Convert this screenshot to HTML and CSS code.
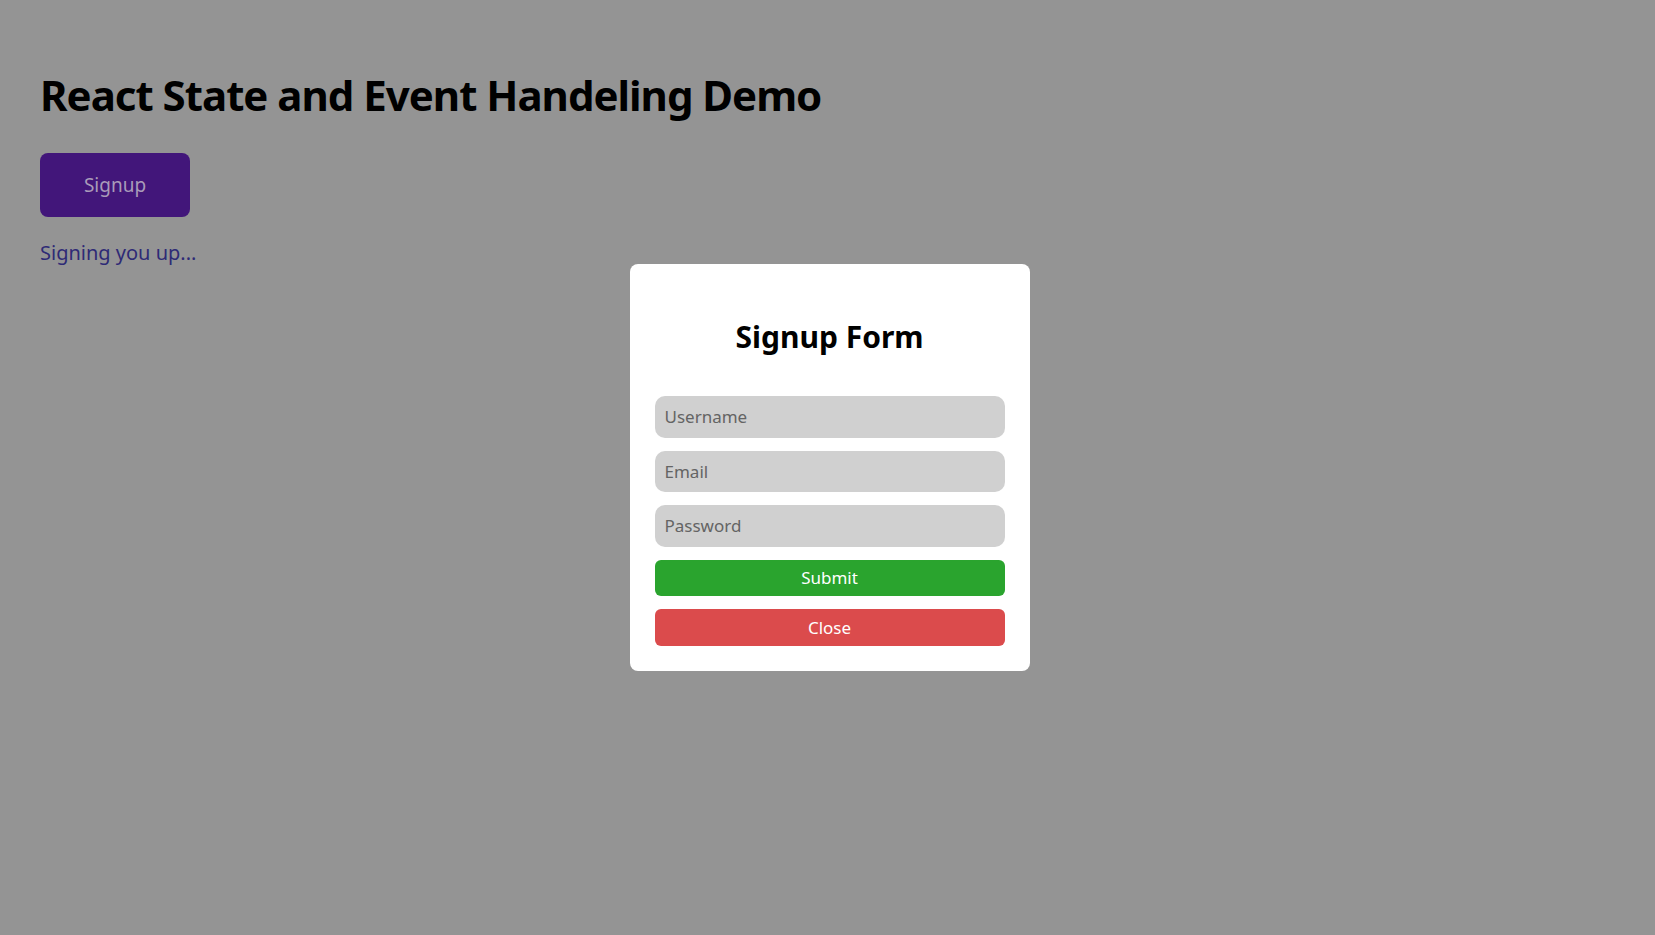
FILE: index.html
```html
<!DOCTYPE html>
<html lang="en">
<head>
<meta charset="utf-8">
<title>React State and Event Handeling Demo</title>
<link rel="stylesheet" href="styles.css">
</head>
<body>
<div class="app">
  <h1 class="title">React State and Event Handeling Demo</h1>
  <button class="signup-btn">Signup</button>
  <p class="status">Signing you up...</p>
</div>
<div class="overlay">
  <form class="modal">
    <h2 class="modal-title">Signup Form</h2>
    <input class="field" type="text" placeholder="Username">
    <input class="field" type="email" placeholder="Email">
    <input class="field" type="password" placeholder="Password">
    <button type="button" class="btn btn-submit">Submit</button>
    <button type="button" class="btn btn-close">Close</button>
  </form>
</div>
</body>
</html>
```
FILE: styles.css
```css
* { box-sizing: border-box; }
html, body {
  margin: 0;
  height: 100%;
}
body {
  background: #949494;
  font-family: "Noto Sans", "Open Sans", sans-serif;
  color: #000;
}
.app {
  padding: 66px 40px 0;
}
.title {
  margin: 0;
  font-size: 42px;
  font-weight: 700;
  line-height: 58px;
  letter-spacing: -1px;
}
.signup-btn {
  margin-top: 29px;
  width: 150px;
  height: 64px;
  border: none;
  border-radius: 8px;
  background: #42167a;
  color: #a99bb9;
  font-family: inherit;
  font-size: 19px;
  display: block;
}
.status {
  margin: 22px 0 0;
  font-size: 20px;
  line-height: 28px;
  color: #2e2a76;
}
.overlay {
  position: absolute;
  inset: 0;
  display: flex;
  justify-content: center;
  align-items: flex-start;
  padding-top: 264px;
}
.modal {
  width: 400px;
  background: #fff;
  border-radius: 8px;
  padding: 52px 25px 25px;
  display: flex;
  flex-direction: column;
  gap: 13px;
  margin-left: 4px;
}
.modal-title {
  margin: 0 0 26px;
  text-align: center;
  font-size: 30px;
  font-weight: 700;
  line-height: 41px;
}
.field {
  height: 41.5px;
  border: none;
  border-radius: 10px;
  background: #d0d0d0;
  padding: 0 10px;
  font-family: inherit;
  font-size: 17px;
  color: #333;
}
.field::placeholder { color: #646464; }
.btn {
  height: 36.5px;
  border: none;
  border-radius: 6px;
  color: #fff;
  font-family: inherit;
  font-size: 17px;
}
.btn-submit { background: #2aa42e; }
.btn-close { background: #db4b4c; }
```
